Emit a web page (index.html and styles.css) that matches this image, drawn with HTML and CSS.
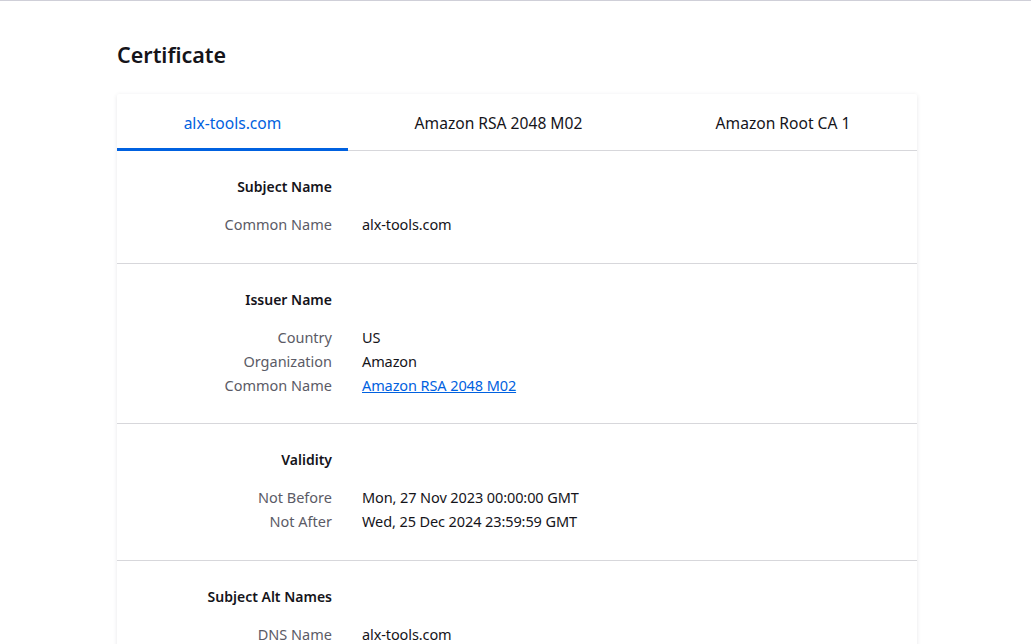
FILE: index.html
```html
<!DOCTYPE html>
<html lang="en">
<head>
<meta charset="utf-8">
<title>Certificate</title>
<link rel="stylesheet" href="styles.css">
</head>
<body>
<div class="topline"></div>
<main class="page">
  <h1 class="title">Certificate</h1>
  <section class="card">
    <nav class="tabs">
      <div class="tab active">alx-tools.com</div>
      <div class="tab">Amazon RSA 2048 M02</div>
      <div class="tab">Amazon Root CA 1</div>
    </nav>
    <div class="info">
      <div class="group">
        <div class="row head"><div class="label">Subject Name</div></div>
        <div class="row"><div class="label">Common Name</div><div class="value">alx-tools.com</div></div>
      </div>
      <div class="group group-tight">
        <div class="row head"><div class="label">Issuer Name</div></div>
        <div class="row"><div class="label">Country</div><div class="value">US</div></div>
        <div class="row"><div class="label">Organization</div><div class="value">Amazon</div></div>
        <div class="row"><div class="label">Common Name</div><div class="value"><a href="#" class="link">Amazon RSA 2048 M02</a></div></div>
      </div>
      <div class="group">
        <div class="row head"><div class="label">Validity</div></div>
        <div class="row"><div class="label">Not Before</div><div class="value">Mon, 27 Nov 2023 00:00:00 GMT</div></div>
        <div class="row"><div class="label">Not After</div><div class="value">Wed, 25 Dec 2024 23:59:59 GMT</div></div>
      </div>
      <div class="group">
        <div class="row head"><div class="label">Subject Alt Names</div></div>
        <div class="row"><div class="label">DNS Name</div><div class="value">alx-tools.com</div></div>
      </div>
    </div>
  </section>
</main>
</body>
</html>
```

FILE: styles.css
```css
html, body {
  margin: 0;
  padding: 0;
  background: #ffffff;
}
body {
  font-family: "Noto Sans", "Open Sans", sans-serif;
  font-size: 14.5px;
  color: #15141a;
  overflow: hidden;
  height: 644px;
}
.topline {
  height: 0;
  border-top: 1px solid #cfcfd8;
}
.page {
  width: 800px;
  margin: 0 auto;
  padding-left: 3px;
}
.title {
  font-size: 21.5px;
  font-weight: 600;
  margin: 0;
  padding-top: 38px;
  line-height: 32px;
  height: 55px;
  box-sizing: content-box;
}
.card {
  background: #fff;
  box-shadow: 0 1px 4px rgba(58, 57, 68, 0.12);
  border-radius: 2px;
}
.tabs {
  display: flex;
  height: 56px;
  border-bottom: 1px solid #d7d7db;
}
.tab {
  flex: 1 1 auto;
  display: flex;
  align-items: center;
  justify-content: center;
  font-size: 15.6px;
  color: #15141a;
  padding-top: 2px;
}
.tab.active {
  color: #0061e0;
  box-shadow: inset 0 -3px 0 #0061e0;
  margin-bottom: -1px;
  padding-bottom: 1px;
}
.info {
  display: flex;
  flex-direction: column;
}
.group {
  display: flex;
  flex-direction: column;
  padding: 24px 0 27px;
  border-bottom: 1px solid #d7d7db;
}
.group.group-tight {
  padding-bottom: 26px;
}
.row {
  display: grid;
  grid-template-columns: 215px 1fr;
  column-gap: 30px;
  height: 24px;
  line-height: 24px;
}
.row.head {
  margin-bottom: 13px;
}
.label {
  text-align: right;
  color: #5b5b66;
  white-space: nowrap;
}
.head .label {
  color: #15141a;
  font-weight: 600;
  font-size: 14px;
}
.value {
  color: #15141a;
  white-space: nowrap;
  letter-spacing: -0.1px;
}
.link {
  color: #0061e0;
  text-decoration: underline;
}
```
